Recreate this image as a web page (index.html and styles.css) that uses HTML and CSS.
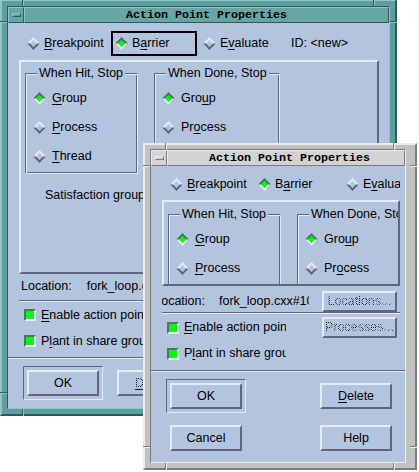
FILE: index.html
```html
<!DOCTYPE html>
<html>
<head>
<meta charset="utf-8">
<title>Action Point Properties</title>
<link rel="stylesheet" href="styles.css">
</head>
<body>
<div class="wm wm-teal w1">
  <i class="rz v tl"></i><i class="rz h tl"></i><i class="rz v tr"></i><i class="rz h tr"></i>
  <i class="rz v bl"></i><i class="rz h bl"></i>
  <div class="wm-in">
    <div class="titlebar">
      <div class="menubtn"><span class="menuglyph"></span></div>
      <div class="title">Action Point Properties</div>
    </div>
    <div class="client">
      <div class="toprow">
        <div class="tog"><span class="dia"></span><span><u>B</u>reakpoint</span></div>
        <div class="tog focus"><span class="dia on"></span><span>B<u>a</u>rrier</span></div>
        <div class="tog"><span class="dia"></span><span>E<u>v</u>aluate</span></div>
        <span class="idl">ID: &lt;new&gt;</span>
      </div>
      <div class="frame">
        <div class="grps">
          <div class="grp g1">
            <div class="grp-title"><span>When Hit, Stop</span></div>
            <div class="grp-box">
              <div class="item"><span class="dia on"></span><span><u>G</u>roup</span></div>
              <div class="item"><span class="dia"></span><span><u>P</u>rocess</span></div>
              <div class="item"><span class="dia"></span><span><u>T</u>hread</span></div>
            </div>
          </div>
          <div class="grp g2">
            <div class="grp-title"><span>When Done, Stop</span></div>
            <div class="grp-box">
              <div class="item"><span class="dia on"></span><span>Gro<u>u</u>p</span></div>
              <div class="item"><span class="dia"></span><span>Pr<u>o</u>cess</span></div>
            </div>
          </div>
        </div>
        <div class="satis">Satisfaction group:</div>
      </div>
      <div class="locrow">
        <span class="loclbl"><span>Location:</span></span>
        <span class="locval">fork_loop.cxx#10</span>
        <span class="pb small"><span class="insens">Locations...</span></span>
      </div>
      <div class="sep"></div>
      <div class="checks">
        <div class="chk"><span class="cb"></span><span class="cbl"><u>E</u>nable action point</span><span class="pb small"><span class="insens">Processes...</span></span></div>
        <div class="chk"><span class="cb"></span><span class="cbl">P<u>l</u>ant in share group</span></div>
      </div>
      <div class="sep full"></div>
      <div class="btns">
        <div class="bc def"><span class="pb">OK</span></div>
        <div class="bc"><span class="pb"><span class="insens"><u>D</u>elete</span></span></div>
        <div class="bc"><span class="pb">Cancel</span></div>
        <div class="bc"><span class="pb">Help</span></div>
      </div>
    </div>
  </div>
</div>

<div class="wm wm-grey w2">
  <i class="rz v tl"></i><i class="rz h tl"></i><i class="rz v tr"></i><i class="rz h tr"></i>
  <i class="rz v bl"></i><i class="rz h bl"></i><i class="rz v br"></i><i class="rz h br"></i>
  <div class="wm-in">
    <div class="titlebar">
      <div class="menubtn"><span class="menuglyph"></span></div>
      <div class="title">Action Point Properties</div>
    </div>
    <div class="client">
      <div class="toprow">
        <div class="tog"><span class="dia"></span><span><u>B</u>reakpoint</span></div>
        <div class="tog"><span class="dia on"></span><span>B<u>a</u>rrier</span></div>
        <div class="tog"><span class="dia"></span><span>E<u>v</u>aluate</span></div>
        <span class="idl">ID: &lt;new&gt;</span>
      </div>
      <div class="frame">
        <div class="grps">
          <div class="grp g1">
            <div class="grp-title"><span>When Hit, Stop</span></div>
            <div class="grp-box">
              <div class="item"><span class="dia on"></span><span><u>G</u>roup</span></div>
              <div class="item"><span class="dia"></span><span><u>P</u>rocess</span></div>
              <div class="item"><span class="dia"></span><span><u>T</u>hread</span></div>
            </div>
          </div>
          <div class="grp g2">
            <div class="grp-title"><span>When Done, Stop</span></div>
            <div class="grp-box">
              <div class="item"><span class="dia on"></span><span>Gro<u>u</u>p</span></div>
              <div class="item"><span class="dia"></span><span>Pr<u>o</u>cess</span></div>
            </div>
          </div>
        </div>
      </div>
      <div class="locrow">
        <span class="loclbl"><span>Location:</span></span>
        <span class="locval">fork_loop.cxx#10</span>
        <span class="pb small"><span class="insens">Locations...</span></span>
      </div>
      <div class="sep"></div>
      <div class="checks">
        <div class="chk"><span class="cb"></span><span class="cbl"><u>E</u>nable action point</span><span class="pb small"><span class="insens">Processes...</span></span></div>
        <div class="chk"><span class="cb"></span><span class="cbl">P<u>l</u>ant in share group</span></div>
      </div>
      <div class="sep full"></div>
      <div class="btns">
        <div class="bc def"><span class="pb">OK</span></div>
        <div class="bc"><span class="pb"><span><u>D</u>elete</span></span></div>
        <div class="bc"><span class="pb">Cancel</span></div>
        <div class="bc"><span class="pb">Help</span></div>
      </div>
    </div>
  </div>
</div>
</body>
</html>
```
FILE: styles.css
```css
:root {
  --bg: #b3c5de;
  --lt: #e4ebf5;
  --dk: #60667e;
  --tl: #93c4c3;
  --tm: #5f9ea0;
  --tt: #66a7a4;
  --td: #2d5a5a;
  --gl: #ececec;
  --gm: #c2c2c2;
  --gt: #d3d3d3;
  --gd: #7c7c7c;
}

html, body {
  margin: 0;
  padding: 0;
}

body {
  width: 419px;
  height: 472px;
  position: relative;
  overflow: hidden;
  background: #ffffff;
  font-family: "Liberation Sans", Arial, sans-serif;
  font-size: 12.5px;
  line-height: 15px;
  color: #000;
}

u {
  text-decoration: underline;
  text-underline-offset: 2px;
  text-decoration-thickness: 1px;
}

/* ---------- window manager frames ---------- */
.wm {
  position: absolute;
  box-sizing: border-box;
  border: 2px solid;
  padding: 5px;
}

.wm-teal {
  left: 0;
  top: -1px;
  width: 397px;
  height: 417px;
  background: var(--tm);
  border-color: var(--tl) var(--td) var(--td) var(--tl);
}

.wm-grey {
  left: 143px;
  top: 143px;
  width: 274px;
  height: 327px;
  padding: 4px 9px 5px 5px;
  background: var(--gm);
  border-color: var(--gl) var(--gd) var(--gd) var(--gl);
}

.wm-in {
  height: 100%;
  box-sizing: border-box;
  border: 1px solid;
  display: flex;
  flex-direction: column;
}

.wm-teal .wm-in { border-color: var(--td) var(--tl) var(--tl) var(--td); }
.wm-grey .wm-in { border-color: var(--gd) var(--gl) var(--gl) var(--gd); }

.titlebar {
  display: flex;
  height: 16px;
  flex: none;
}

.menubtn {
  width: 16px;
  flex: none;
  box-sizing: border-box;
  border: 1px solid;
  display: flex;
  align-items: center;
  justify-content: center;
}

.menuglyph {
  width: 9px;
  height: 4px;
  box-sizing: border-box;
  border: 1px solid;
}

.title {
  flex: 1;
  box-sizing: border-box;
  border: 1px solid;
  text-align: center;
  font-family: "Liberation Mono", "Courier New", monospace;
  font-weight: bold;
  font-size: 11.67px;
  line-height: 14px;
  white-space: nowrap;
  overflow: hidden;
}
.w2 .title { padding-left: 7px; }

.wm-teal .menubtn, .wm-teal .title {
  background: var(--tt);
  border-color: var(--tl) var(--td) var(--td) var(--tl);
}
.wm-teal .menuglyph { border-color: var(--tl) var(--td) var(--td) var(--tl); }

.wm-grey .menubtn, .wm-grey .title {
  background: var(--gt);
  border-color: var(--gl) var(--gd) var(--gd) var(--gl);
}
.wm-grey .menuglyph { border-color: var(--gl) var(--gd) var(--gd) var(--gl); }

/* resize-corner grooves */
.rz {
  position: absolute;
  display: block;
}
.rz.v { width: 1px; height: 7px; }
.rz.h { width: 7px; height: 1px; }
.wm-teal .rz { background: var(--td); }
.wm-teal .rz.v { border-right: 1px solid var(--tl); }
.wm-teal .rz.h { border-bottom: 1px solid var(--tl); }
.wm-grey .rz { background: var(--gd); }
.wm-grey .rz.v { border-right: 1px solid var(--gl); }
.wm-grey .rz.h { border-bottom: 1px solid var(--gl); }

.rz.v.tl { left: 20px; top: -2px; }
.rz.h.tl { top: 20px; left: -2px; }
.rz.v.tr { right: 20px; top: -2px; }
.rz.h.tr { top: 20px; right: -2px; }
.rz.v.bl { left: 20px; bottom: -2px; }
.rz.h.bl { bottom: 20px; left: -2px; }
.rz.v.br { right: 20px; bottom: -2px; }
.rz.h.br { bottom: 20px; right: -2px; }

/* ---------- dialog client ---------- */
.client {
  flex: 1;
  background: var(--bg);
  overflow: hidden;
  display: flex;
  flex-direction: column;
  min-height: 0;
}

.toprow {
  display: flex;
  align-items: center;
  padding: 8px 0 0 15px;
  white-space: nowrap;
}
.w2 .toprow {
  padding-top: 6px;
  margin-right: 5px;
  overflow: hidden;
}

.tog {
  flex: none;
  display: flex;
  align-items: center;
  gap: 4px;
  width: 86px;
  height: 25px;
  box-sizing: border-box;
  border: 2px solid transparent;
  padding-left: 2px;
  margin-right: 2px;
}
.tog.focus { border-color: #000; }

.idl { margin-left: 4px; flex: none; }

.dia {
  flex: none;
  display: block;
  width: 9px;
  height: 9px;
  box-sizing: border-box;
  border: 2px solid;
  border-color: var(--lt) var(--dk) var(--dk) var(--lt);
  margin: 0 2px;
  transform: rotate(45deg);
  background: var(--bg);
}
.dia.on {
  border-color: var(--dk) var(--lt) var(--lt) var(--dk);
  background: #00ff00;
}

.frame {
  flex: none;
  margin: 4px 10px 0 11px;
  height: 214px;
  box-sizing: border-box;
  border: 2px solid;
  border-color: var(--lt) var(--dk) var(--dk) var(--lt);
  overflow: hidden;
}
.w2 .frame {
  margin: 3px 5px 0 11px;
  height: 86px;
}

.grps {
  display: flex;
  align-items: flex-start;
  gap: 16px;
  padding: 4px 0 0 4px;
}
.w2 .grps { padding-top: 5px; }

.grp { flex: none; }
.g1 { width: 113px; }
.g2 { width: 126px; }

.grp-title {
  position: relative;
  z-index: 1;
  height: 15px;
  margin-bottom: -8px;
  padding-left: 12px;
  white-space: nowrap;
}
.grp-title span {
  background: var(--bg);
  padding: 0 2px;
}

.grp-box {
  border: 1px solid;
  border-color: var(--dk) var(--lt) var(--lt) var(--dk);
  box-shadow: inset 1px 1px 0 var(--lt), inset -1px -1px 0 var(--dk);
  padding: 10px 0 2px 7px;
}

.item {
  display: flex;
  align-items: center;
  gap: 6px;
  height: 29px;
  white-space: nowrap;
}

.satis {
  padding: 14px 0 0 24px;
  white-space: nowrap;
}

.locrow {
  flex: none;
  display: flex;
  align-items: center;
  height: 20px;
  margin-top: 2px;
  padding-left: 13px;
  padding-right: 10px;
  white-space: nowrap;
}
.loclbl {
  display: flex;
  justify-content: flex-end;
  overflow: hidden;
  margin-right: 15px;
  flex: none;
}
.locval { flex: none; }
.locrow .pb { margin-left: auto; }

.w2 .locrow {
  height: 22px;
  margin-top: 4px;
  padding-left: 11px;
  padding-right: 8px;
}
.w2 .loclbl { width: 43px; margin-right: 14px; }
.w2 .locval { width: 90px; overflow: hidden; }

.sep {
  flex: none;
  height: 0;
  border-top: 1px solid var(--dk);
  border-bottom: 1px solid var(--lt);
  margin: 4px 10px 0 11px;
}
.w2 .sep { margin: 0 5px 0 11px; }
.sep.full, .w2 .sep.full { margin: 3px 0 0 0; }
.w2 .sep.full { margin-top: 4px; }

.checks { flex: none; }
.chk {
  display: flex;
  align-items: center;
  height: 26px;
  padding-left: 16px;
  padding-right: 10px;
  white-space: nowrap;
}
.w2 .chk { padding-right: 8px; }
.w2 .chk:first-child { height: 27px; }
.w2 .chk:last-child { height: 25px; }

.cb {
  flex: none;
  width: 12px;
  height: 12px;
  box-sizing: border-box;
  border: 2px solid;
  border-color: var(--dk) var(--lt) var(--lt) var(--dk);
  background: #00ff00;
}
.cbl { margin-left: 5px; flex: none; }
.w2 .cbl { width: 102px; overflow: hidden; }
.chk .pb { margin-left: auto; }

.btns {
  flex: none;
  display: flex;
  gap: 10px;
  padding: 7px 0 0 15px;
}
.w2 .btns {
  display: grid;
  grid-template-columns: 80px 80px;
  justify-content: space-between;
  row-gap: 8px;
  padding: 7px 9px 0 15px;
}

.bc {
  flex: none;
  padding: 3px;
  border: 1px solid transparent;
}
.bc.def { border-color: var(--dk) var(--lt) var(--lt) var(--dk); }

.pb {
  flex: none;
  display: flex;
  align-items: center;
  justify-content: center;
  width: 72px;
  height: 26px;
  box-sizing: border-box;
  border: 2px solid;
  border-color: var(--lt) var(--dk) var(--dk) var(--lt);
  white-space: nowrap;
  overflow: hidden;
}
.pb.small {
  width: 75px;
  height: 21px;
}

.insens {
  color: transparent;
  background: repeating-conic-gradient(#1c1c24 0 25%, transparent 0 50%) 0 0 / 2px 2px;
  -webkit-background-clip: text;
  background-clip: text;
}
.insens u { text-decoration-color: #1c1c24; }
```
